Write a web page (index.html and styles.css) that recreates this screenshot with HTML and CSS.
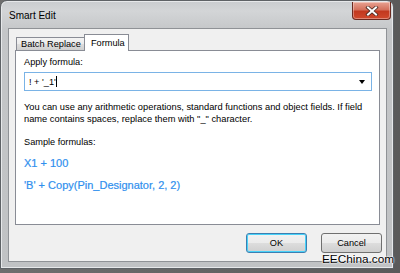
FILE: index.html
```html
<!DOCTYPE html>
<html>
<head>
<meta charset="utf-8">
<link rel="stylesheet" href="styles.css">
</head>
<body>
<div class="desk">
  <div class="window">
    <div class="titlebar">
      <span class="title">Smart Edit</span>
      <div class="close"><svg width="14" height="10" viewBox="0 0 14 10"><path d="M3 1.5 L11 8.5 M11 1.5 L3 8.5" stroke="#4a2a22" stroke-width="3.6" stroke-linecap="square"/><path d="M3 1.5 L11 8.5 M11 1.5 L3 8.5" stroke="#ffffff" stroke-width="2" stroke-linecap="square"/></svg></div>
    </div>
    <div class="client">
      <div class="tabs">
        <div class="tab">Batch Replace</div>
        <div class="tab active">Formula</div>
      </div>
      <div class="panel">
        <div class="label">Apply formula:</div>
        <div class="combo">
          <span class="value">! + '_1'<span class="caret"></span></span>
          <span class="arrow"></span>
        </div>
        <p class="desc">You can use any arithmetic operations, standard functions and object fields. If field name contains spaces, replace them with "_" character.</p>
        <div class="label samples">Sample formulas:</div>
        <div class="sample">X1 + 100</div>
        <div class="sample">'B' + Copy(Pin_Designator, 2, 2)</div>
      </div>
      <div class="buttons">
        <div class="btn default">OK</div>
        <div class="btn">Cancel</div>
      </div>
    </div>
  </div>
  <div class="watermark">EEChina.com</div>
</div>
</body>
</html>
```
FILE: styles.css
```css
html, body {
  margin: 0;
  padding: 0;
}
body {
  width: 400px;
  height: 273px;
  overflow: hidden;
  background: #5c5c5c;
  font-family: "Liberation Sans", Arial, sans-serif;
}
.desk {
  position: relative;
  width: 400px;
  height: 273px;
  background: linear-gradient(90deg, #6e6e6e 0, #5a5a5a 100%);
}
.window {
  width: 392px;
  height: 267px;
  border: 1px solid #5e6266;
  border-radius: 7px 7px 0 0;
  background: linear-gradient(180deg, #c9cccf 0, #d3d5d7 10px, #c4c6c8 30px, #c0c2c4 100%);
  display: flex;
  flex-direction: column;
  box-shadow: inset 0 0 0 1px #e6e8ea;
}
.titlebar {
  height: 27px;
  display: flex;
  align-items: flex-start;
  padding-left: 8px;
  padding-right: 2px;
}
.title {
  font-size: 10px;
  color: #000;
  margin-top: 9px;
  line-height: 12px;
}
.close {
  margin-left: auto;
  margin-top: 1px;
  width: 39px;
  height: 18px;
  box-sizing: border-box;
  border: 1px solid #6b2a20;
  border-top: none;
  border-radius: 0 0 4px 4px;
  background: linear-gradient(180deg, #e8a292 0, #d4715d 45%, #c2391f 55%, #d0492c 100%);
  display: flex;
  align-items: center;
  justify-content: center;
  box-shadow: inset 0 0 0 1px rgba(255,255,255,0.35);
}
.close svg {
  display: block;
}
.client {
  margin-left: 7px;
  width: 379px;
  height: 234px;
  box-sizing: border-box;
  border: 1px solid #8f9296;
  background: #f0f0f0;
  padding: 5px 6px 0 6px;
  display: flex;
  flex-direction: column;
}
.tabs {
  display: flex;
  align-items: flex-end;
  height: 16px;
  padding-left: 1px;
  position: relative;
  z-index: 1;
}
.tab {
  flex-shrink: 0;
  white-space: nowrap;
  height: 13px;
  box-sizing: border-box;
  border: 1px solid #898c95;
  border-bottom: none;
  background: linear-gradient(180deg, #f3f3f3 0, #ebebeb 50%, #dddddd 51%, #cfcfcf 100%);
  font-size: 9.2px;
  line-height: 12px;
  padding: 0 0 0 4px;
  color: #000;
  width: 69px;
}
.tab.active {
  height: 17px;
  width: 45px;
  margin-left: -1px;
  margin-bottom: -1px;
  background: #ffffff;
  padding: 2px 0 0 6px;
}
.panel {
  height: 175px;
  box-sizing: border-box;
  border: 1px solid #898c95;
  background: #ffffff;
  padding: 6px 8px 0 8px;
}
.label {
  font-size: 9.2px;
  line-height: 11px;
  color: #000;
}
.combo {
  margin-top: 4px;
  height: 19px;
  width: 348px;
  box-sizing: border-box;
  border: 1px solid #7ab3e6;
  display: flex;
  align-items: center;
  padding: 0 4px 0 4px;
}
.value {
  font-size: 9.2px;
  color: #000;
  display: flex;
  align-items: center;
}
.caret {
  display: inline-block;
  width: 1px;
  height: 11px;
  background: #000;
  margin-left: 0;
}
.arrow {
  margin-left: auto;
  margin-right: 2px;
  width: 0;
  height: 0;
  border-left: 3px solid transparent;
  border-right: 3px solid transparent;
  border-top: 4px solid #000;
}
.desc {
  margin: 10px 0 0 0;
  font-size: 9.3px;
  line-height: 12px;
  color: #000;
  width: 348px;
}
.samples {
  margin-top: 12px;
}
.sample {
  margin-top: 9px;
  font-size: 11px;
  line-height: 13px;
  color: #2f8fee;
  -webkit-text-stroke: 0.2px #2f8fee;
}
.buttons {
  display: flex;
  justify-content: flex-end;
  gap: 14px;
  margin-top: 8px;
  margin-right: -2px;
}
.btn {
  width: 61px;
  height: 20px;
  box-sizing: border-box;
  border: 1px solid #707070;
  border-radius: 3px;
  background: linear-gradient(180deg, #f2f2f2 0, #ebebeb 50%, #dddddd 51%, #cfcfcf 100%);
  font-size: 9.2px;
  line-height: 18px;
  text-align: center;
  color: #000;
}
.btn.default {
  border-color: #3c7fb1;
  box-shadow: inset 0 0 0 1px #48d2f9;
}
.watermark {
  position: absolute;
  left: 322px;
  top: 252px;
  font-family: "Liberation Sans", sans-serif;
  font-size: 11.8px;
  line-height: 15px;
  color: #000;
  text-shadow: 0 0 2px #fff, 0 0 2px #fff, 0 0 1px #fff;
}
```
